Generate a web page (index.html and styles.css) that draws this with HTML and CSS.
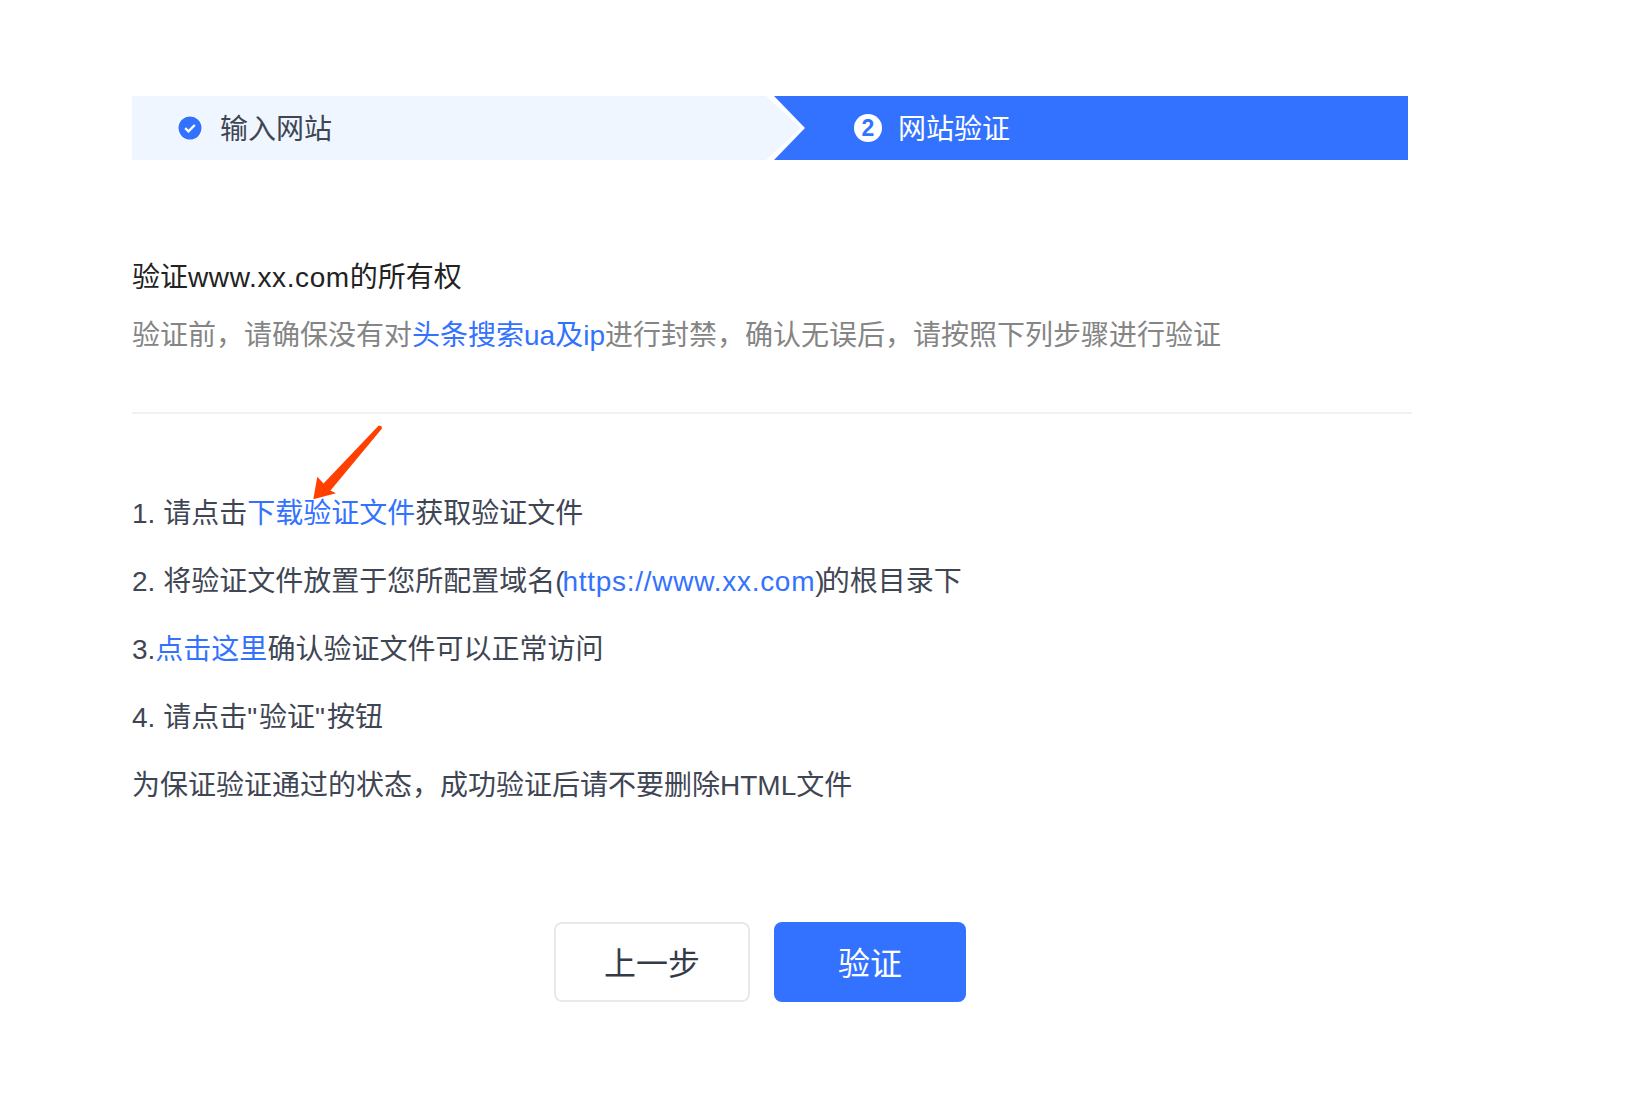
FILE: index.html
```html
<!DOCTYPE html>
<html lang="zh-CN">
<head>
<meta charset="utf-8">
<title>网站验证</title>
<link rel="stylesheet" href="styles.css">
</head>
<body>
<main class="page">
  <div class="steps">
    <div class="step step-done">
      <svg class="check" width="26" height="26" viewBox="0 0 26 26"><circle cx="13" cy="13" r="12.5" fill="#fff"/><circle cx="13" cy="13" r="11.5" fill="#3372ff"/><path d="M8.2 13.2l3.3 3.2 6.3-6.4" fill="none" stroke="#fff" stroke-width="2.4"/></svg>
      <span class="step-label">输入网站</span>
    </div>
    <div class="step step-active">
      <span class="num">2</span>
      <span class="step-label">网站验证</span>
    </div>
  </div>
  <section class="intro">
    <h1 class="title">验证<span class="wide">www.xx.com</span>的所有权</h1>
    <p class="sub">验证前，请确保没有对<a class="link">头条搜索ua及ip</a>进行封禁，确认无误后，请按照下列步骤进行验证</p>
  </section>
  <section class="list">
    <svg class="arrow" width="72" height="80" viewBox="0 0 72 80"><path d="M66.5 0.8 L11.5 58.5 L5.3 51.7 L1.3 74.3 L24 68.3 L18.5 65.5 L69.8 3.8 Q70.5 0 66.5 0.8 Z" fill="#ff4000"/></svg>
    <p class="line">1. 请点击<a class="link">下载验证文件</a>获取验证文件</p>
    <p class="line">2. 将验证文件放置于您所配置域名<span class="paren">(</span><a class="link url">https://www.xx.com</a><span class="paren-close">)</span>的根目录下</p>
    <p class="line">3.<a class="link">点击这里</a>确认验证文件可以正常访问</p>
    <p class="line">4. 请点击<span class="quote">"</span>验证<span class="quote">"</span>按钮</p>
    <p class="line">为保证验证通过的状态，成功验证后请不要删除HTML文件</p>
  </section>
  <div class="actions">
    <button class="btn btn-ghost" type="button"><span class="btn-label">上一步</span></button>
    <button class="btn btn-primary" type="button"><span class="btn-label">验证</span></button>
  </div>
</main>
</body>
</html>
```
FILE: styles.css
```css
* { box-sizing: border-box; }
html, body { margin: 0; padding: 0; background: #fff; }
body {
  font-family: "Liberation Sans", "Noto Sans CJK SC", sans-serif;
  font-size: 28px;
  color: #3f4653;
}
.page {
  width: 1628px;
  height: 1102px;
  overflow: hidden;
  padding: 96px 0 0 132px;
}
.steps {
  display: flex;
  gap: 8px;
  width: 1276px;
  height: 64px;
}
.step {
  flex: 0 0 634px;
  display: flex;
  align-items: center;
  position: relative;
}
.step-label { padding-bottom: 2px; }
.step-done {
  background: #eff6ff;
  padding-left: 45px;
  gap: 17px;
  z-index: 1;
}
.step-done::after {
  content: "";
  position: absolute;
  left: 100%;
  top: 0;
  width: 35px;
  height: 100%;
  background: #eff6ff;
  clip-path: polygon(0 0, 100% 50%, 0 100%);
}
.step-active {
  background: #3372ff;
  color: #fff;
  padding-left: 80px;
  gap: 16px;
  clip-path: polygon(0 0, 100% 0, 100% 100%, 0 100%, 31px 50%);
}
.check { display: block; }
.num {
  width: 28px;
  height: 28px;
  border-radius: 50%;
  background: #fff;
  color: #3372ff;
  font-size: 23px;
  font-weight: 700;
  line-height: 28px;
  text-align: center;
}
.intro {
  width: 1280px;
  height: 254px;
  padding-top: 98px;
  border-bottom: 2px solid #f0f1f3;
}
.title {
  margin: 0;
  font-size: 28px;
  font-weight: 400;
  line-height: 40px;
  color: #222;
}
.sub {
  margin: 18px 0 0;
  line-height: 40px;
  color: #858585;
}
.wide { letter-spacing: 0.62px; }
.url { letter-spacing: 0.73px; }
.paren { letter-spacing: -2px; }
.paren-close { letter-spacing: -2.8px; }
.quote { letter-spacing: 2px; }
.link { color: #3372ff; }
.list {
  position: relative;
  padding-top: 80px;
}
.arrow {
  position: absolute;
  left: 180px;
  top: 11px;
}
.line {
  margin: 0 0 28px;
  line-height: 40px;
}
.actions {
  display: flex;
  gap: 24px;
  margin-top: 116px;
  padding-left: 422px;
}
.btn {
  height: 80px;
  font: inherit;
  font-size: 32px;
  border-radius: 8px;
  padding: 0;
}
.btn-label { display: block; padding-bottom: 2px; }
.btn-ghost {
  width: 196px;
  background: #fff;
  border: 2px solid #e8e9ee;
  color: #333b47;
}
.btn-primary {
  width: 192px;
  background: #3372ff;
  border: 0;
  color: #fff;
}
```
